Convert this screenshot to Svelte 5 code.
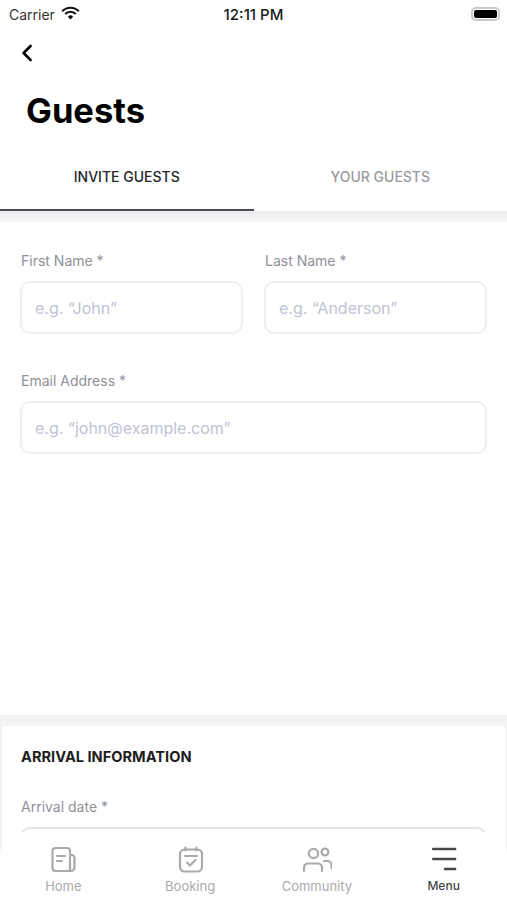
<script>
  const tabs = [
    { id: 'invite', label: 'INVITE GUESTS', active: true },
    { id: 'yours', label: 'YOUR GUESTS', active: false }
  ]
  const nav = [
    { id: 'home', label: 'Home' },
    { id: 'booking', label: 'Booking' },
    { id: 'community', label: 'Community' },
    { id: 'menu', label: 'Menu' }
  ]
</script>

<div class="screen">
  <header class="status">
    <div class="status-left">
      <span>Carrier</span>
      <svg width="19" height="14" viewBox="0 0 19 14" fill="none" stroke="#111" stroke-width="2.1">
        <path d="M1.2 5.2a11.6 11.6 0 0 1 16.6 0" />
        <path d="M4.2 8a7.4 7.4 0 0 1 10.6 0" />
        <path d="M9.5 13.6 6.9 10.7a3.6 3.6 0 0 1 5.2 0z" fill="#111" stroke="none" />
      </svg>
    </div>
    <span class="time">12:11 PM</span>
    <div class="battery"><i></i></div>
  </header>

  <button class="back" aria-label="Back">
    <svg width="12" height="18" viewBox="0 0 12 18" fill="none" stroke="#000" stroke-width="2.6" stroke-linecap="round" stroke-linejoin="round">
      <path d="M9.6 2 2.6 9l7 7" />
    </svg>
  </button>

  <h1>Guests</h1>

  <div class="tabs">
    {#each tabs as tab}
      <div class="tab" class:active={tab.active}>{tab.label}</div>
    {/each}
  </div>
  <div class="band"></div>

  <form class="form">
    <div class="row">
      <label class="field">
        <span>First Name *</span>
        <input placeholder="e.g. “John”" />
      </label>
      <label class="field">
        <span>Last Name *</span>
        <input placeholder="e.g. “Anderson”" />
      </label>
    </div>
    <label class="field">
      <span>Email Address *</span>
      <input placeholder="e.g. “john@example.com”" />
    </label>
  </form>

  <section class="arrival">
    <h2>ARRIVAL INFORMATION</h2>
    <label class="field">
      <span>Arrival date *</span>
      <input class="date" />
    </label>
  </section>

  <nav class="navbar">
    {#each nav as item}
      <div class="nav-item" class:current={item.id === 'menu'}>
        <svg width="30" height="30" viewBox="0 0 30 30" fill="none" stroke="currentColor" stroke-width="2.2" stroke-linecap="round" stroke-linejoin="round">
          {#if item.id === 'home'}
            <path d="M22 9V6a3 3 0 0 0-3-3H7.500a3 3 0 0 0-3 3v17a3 3 0 0 0 3 3H23a3.500 3.500 0 0 0 3.500-3.500V13a3 3 0 0 0-4.500-2.600V26" />
            <path d="M9 11h8M9 16h5" />
          {:else if item.id === 'booking'}
            <rect x="5" y="4.500" width="22" height="22" rx="4.500" />
            <path d="M10.500 2.500v3M21.500 2.500v3M10 11h12" />
            <path d="m12 17.500 3 3 5.500-5.500" />
          {:else if item.id === 'community'}
            <circle cx="11.500" cy="8.500" r="4.600" />
            <circle cx="23" cy="7" r="3.400" />
            <path d="M2 26v-3.500a4 4 0 0 1 4-4h10a4 4 0 0 1 4 4V26" />
            <path d="M22 16h3.500a4 4 0 0 1 4 4v3" />
          {:else}
            <path d="M4.200 4h22M4.200 14h22M16 24h10.200" stroke-width="2.400" />
          {/if}
        </svg>
        <span>{item.label}</span>
      </div>
    {/each}
  </nav>
</div>

<style>
  :global(body) { background: #fff; }
  .screen {
    position: relative;
    height: 900px;
    overflow: hidden;
    background: #fff;
    font-family: Inter, "Noto Sans", sans-serif;
    color: #1c1d21;
  }
  .status {
    height: 28px;
    padding: 0 7px 0 9px;
    display: flex;
    align-items: center;
    justify-content: space-between;
    position: relative;
    font-size: 14px;
    color: #333;
  }
  .status-left { display: flex; align-items: center; gap: 6px; }
  .status-left svg { margin-top: -3px; }
  .time {
    position: absolute;
    left: 0;
    right: 0;
    text-align: center;
    font-size: 15px;
    color: #1a1a1a;
    font-weight: 500;
  }
  .battery {
    width: 29px;
    height: 14px;
    box-sizing: border-box;
    border: 2px solid #c9c9c9;
    border-radius: 5px;
    padding: 1px;
  }
  .battery i { display: block; height: 100%; background: #000; border-radius: 2px; }
  .back {
    display: block;
    margin: 16px 0 0 21px;
    padding: 0;
    border: 0;
    background: none;
    height: 19px;
  }
  h1 {
    margin: 28px 0 0 26px;
    font-size: 34.500px;
    line-height: 40px;
    font-weight: 700;
    color: #000;
  }
  .tabs {
    display: flex;
    margin-top: 23px;
  }
  .tab {
    flex: 1;
    height: 57px;
    padding-top: 14px;
    box-sizing: border-box;
    text-align: center;
    font-size: 14px;
    line-height: 17px;
    font-weight: 500;
    color: #9a9ba1;
  }
  .tab.active { color: #26272b; border-bottom: 2.500px solid #4a4c50; }
  .band {
    height: 11px;
    background: linear-gradient(#eceef0, #f5f6f7);
  }
  .form {
    height: 493px;
    box-sizing: border-box;
    padding: 29px 20px 0;
    display: flex;
    flex-direction: column;
    gap: 37px;
  }
  .row { display: flex; gap: 21px; }
  .row .field { flex: 1; }
  .field { display: block; }
  .field span {
    display: block;
    font-size: 14px;
    line-height: 20px;
    color: #8f9199;
    margin: 0 0 10px 1px;
  }
  input {
    display: block;
    width: 100%;
    box-sizing: border-box;
    height: 53px;
    padding: 0 13px;
    border: 2px solid #eceef0;
    border-radius: 10px;
    background: #fff;
    font: inherit;
    font-size: 16px;
    outline: none;
  }
  input::placeholder { color: #c0c3d4; opacity: 1; }
  .date { border-color: #e3e4e6; }
  .arrival {
    border-top: 11px solid #f2f3f5;
    border-left: 2px solid #f2f3f5;
    border-right: 2px solid #f2f3f5;
    padding: 22px 18px 0;
  }
  h2 {
    margin: 0 0 31px 1px;
    font-size: 14.600px;
    line-height: 18px;
    font-weight: 700;
    color: #1c1d21;
  }
  .navbar {
    position: absolute;
    left: 0;
    right: 0;
    bottom: 0;
    height: 68px;
    display: flex;
    background: #fff;
    border-radius: 24px 24px 0 0;
  }
  .nav-item {
    flex: 1;
    display: flex;
    flex-direction: column;
    align-items: center;
    padding-top: 13px;
    color: #a9aaac;
    font-size: 13px;
    line-height: 16px;
  }
  .nav-item svg { margin-bottom: 3px; }
  .nav-item.current { color: #45474a; font-size: 12px; font-weight: 500; }
</style>
